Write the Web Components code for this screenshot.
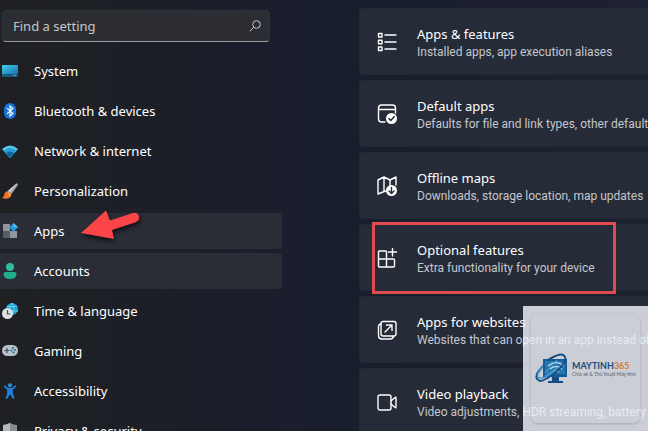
<!DOCTYPE html>
<html lang="en">
<head>
<meta charset="utf-8">
<title>Settings</title>
<style>
html,body{margin:0;height:100%;overflow:hidden;background:#1c1f26}
body{font-family:"Noto Sans","Open Sans",sans-serif;font-size:13px;color:#fff}
</style>
</head>
<body>
<settings-app></settings-app>
<script>
const icons = {
system:`<svg viewBox="0 0 16 16"><defs><linearGradient id="a" x2="1" y2="1"><stop stop-color="#3fd0e6"/><stop offset="1" stop-color="#1672b0"/></linearGradient></defs><rect y="2" width="16" height="12" rx="1" fill="#155b80"/><path d="M0 3q0-1 1-1h14q1 0 1 1v8H0z" fill="url(#a)"/><path d="M11 12.5h1m1 0h1" stroke="#62d6f0"/></svg>`,
bluetooth:`<svg viewBox="0 0 16 16"><rect x="2" width="12" height="16" rx="6" fill="#1674d8"/><path d="M5 5.2l6 5.3-3 2.5V3l3 2.5-6 5.3" fill="none" stroke="#fff" stroke-width="1.1"/></svg>`,
network:`<svg viewBox="0 0 16 16"><path d="M0 6Q8-1 16 6L8 15z" fill="#58cbea"/><path d="M1.7 7.8Q8 2 14.3 7.8L8 15z" fill="#2a9cd8"/><path d="M4 10q4-3 8 0l-4 5z" fill="#1264a8"/></svg>`,
brush:`<svg viewBox="0 0 16 16"><path d="M14.5.3q2 .5 1 2.2L9.5 11 6 8z" fill="#a7adb3"/><path d="M14.5.3L6 8l1.500 1.200z" fill="#d4d8db"/><path d="M5.700 8.200L9 11q.3 4.500-5 4.700-2.500.1-4-1.200 2-.5 2.200-2.500.3-3.500 3.500-3.800z" fill="#ed7826"/><path d="M5.700 8.200L9 11q.2 1.700-1 3z" fill="#ffad5c"/></svg>`,
apps:`<svg viewBox="0 0 16 16"><path d="M1 1h7v7H1z" fill="#8d959d"/><path d="M1 8h7v7H1z" fill="#555e68"/><path d="M8 8h7v7H8z" fill="#9198a0"/><path d="M11.500 0L16 4.300 11.500 8.700 7.300 4.300z" fill="#249ae8"/><path d="M11.500 0L16 4.300h-4.500z" fill="#59bdf5"/></svg>`,
account:`<svg viewBox="0 0 16 16"><circle cx="8" cy="4" r="4" fill="#2bbf9b"/><path d="M3.500 9h9q2 0 2 2 0 5-6.500 5T1.500 11q0-2 2-2z" fill="#1eae8b"/></svg>`,
time:`<svg viewBox="0 0 16 16"><circle cx="10" cy="6" r="6" fill="#209bd3"/><path d="M10 0q-4 5 0 12m0-12q4 5 0 12M5 3.500h10M4 8h12" fill="none" stroke="#5bdcee"/><circle cx="5.500" cy="10.500" r="5.500" fill="#dce1e5"/><path d="M5.500 7v4h3" fill="none" stroke="#4a535b" stroke-width="1.200"/></svg>`,
gaming:`<svg viewBox="0 0 16 16"><rect y="2" width="16" height="11" rx="5.500" fill="#b8c0c7"/><path d="M2.500 7.500h5M5 5v5" stroke="#454e56" stroke-width="1.200"/><g fill="#236a9d"><circle cx="11" cy="5" r="1"/><circle cx="9.500" cy="7.500" r="1"/><circle cx="13" cy="7" r="1"/><circle cx="11.500" cy="9.500" r="1"/></g></svg>`,
access:`<svg viewBox="0 0 16 16"><circle cx="8" cy="2.300" r="2.100" fill="#2390e8"/><path d="M3 2.500q-1.200-.3-1 1 .8 2 3.200 3v3.500L3.700 15q0 1.200 1.300 1l3-5 3 5q1.300.2 1.300-1l-1.500-5V6.500q2.400-1 3.200-3 .2-1.300-1-1L10 5H6z" fill="#1b83df"/></svg>`,
privacy:`<svg viewBox="0 0 16 16"><path d="M8 0q4 2 7 2v5q0 6-7 9Q1 13 1 7V2q3 0 7-2z" fill="#858c94"/><path d="M8 0v16Q1 13 1 7V2q3 0 7-2z" fill="#b3b8bd"/></svg>`,
list:`<path d="M1.500 1.500h3.500v3.500H1.500zM1.500 8.200h3.500v3.500H1.500zM1.500 15h3.500v3.500H1.500zM8 3h11M8 10h11M8 17h11"/>`,
defaults:`<path d="M8 18H4.500Q1.500 18 1.500 15V4q0-3 3-3h11q3 0 3 3v5M1.500 5.500h17"/><circle cx="14.500" cy="14.500" r="5.500" fill="#fff" stroke="none"/><path d="M11.800 14.500l2 2 3.500-4" stroke="#252a37"/>`,
maps:`<path d="M8.500 15l-7.500 3V4l6-3 6 3 6-3v8M7 1v14.500M13 4v6"/><circle cx="14.500" cy="14.500" r="5.500" fill="#fff" stroke="none"/><path d="M14.500 11.500v6m-2.500-2.500l2.500 2.500 2.500-2.500" stroke="#252a37"/>`,
optional:`<path d="M9 3H2.500Q1.500 3 1.500 4v14q0 1 1 1h14q1 0 1-1v-6q0-1-1-1h-15M9.500 19V4q0-1-1-1M15.500 0v8M11.500 4h8"/>`,
websites:`<rect x="4" y="1.500" width="15" height="14.500" rx="2"/><path d="M4 4Q1.500 4 1.500 7v8.500q0 3.500 3.500 3.500h8q3 0 3.500-2.500M8 12l7-7M9.500 5H15v5.500"/>`,
video:`<rect x="1" y="3" width="13" height="15" rx="2"/><path d="M14 9l4-3.500q1-.8 1 .5v9q0 1.300-1 .5L14 12"/>`
};

class SettingsSearch extends HTMLElement {
  constructor(){super();this.attachShadow({mode:'open'}).innerHTML=`<style>
:host{display:block;margin-right:12px}
form{display:flex;align-items:center;height:32px;box-sizing:border-box;margin:0;border:1px solid #2f3237;border-bottom-color:#989a9d;border-radius:4px;background:#2b2d32}
input{flex:1;min-width:0;padding:0 0 0 10px;border:0;outline:0;background:none;font:inherit;color:#fff}
input::placeholder{color:#c5c7c9;opacity:1}
button{display:flex;padding:8px;border:0;background:none;color:#c5c7c9}
svg{width:12px;height:12px;fill:none;stroke:currentColor}
</style><form role="search"><input type="text" placeholder="Find a setting" aria-label="Find a setting"><button type="button" aria-label="Search"><svg viewBox="0 0 12 12"><circle cx="7.500" cy="4.500" r="3.800"/><path d="M4.800 7.200L.7 11.300"/></svg></button></form>`}
}
customElements.define('settings-search',SettingsSearch);

class NavItem extends HTMLElement {
  constructor(){super();this.attachShadow({mode:'open'}).innerHTML=`<style>
:host{display:block;position:relative}
a{display:flex;align-items:center;gap:16px;height:36px;color:inherit;text-decoration:none;white-space:nowrap;border-radius:0 4px 4px 0}
:host([highlighted]) a{background:#2a2d35;margin-left:-2px;padding-left:2px}
a svg{display:block;width:16px;height:16px}
</style><a href="#">${icons[this.getAttribute('icon')]}<span><slot></slot></span></a><slot name="marker"></slot>`}
}
customElements.define('nav-item',NavItem);

class PointerArrow extends HTMLElement {
  constructor(){super();this.attachShadow({mode:'open'}).innerHTML=`<style>
:host{position:absolute;left:78px;top:-4px;pointer-events:none}
svg{display:block;width:64px;height:34px;filter:drop-shadow(1px 3px 2px #0009)}
</style><svg viewBox="0 0 64 34" aria-hidden="true"><path d="M1 24L26 1.500l4 10L53 4q5-1 6 4 .5 4-4 5.500L32 21l2 9z" fill="#fb4546"/></svg>`}
}
customElements.define('pointer-arrow',PointerArrow);

class SettingCard extends HTMLElement {
  constructor(){super();this.attachShadow({mode:'open'}).innerHTML=`<style>
:host{display:block;position:relative}
a{display:flex;align-items:center;gap:20px;height:67px;box-sizing:border-box;padding-left:17px;border-radius:4px 0 0 4px;background:#262b38;border:1px solid #232836;border-right:0;color:#fff;text-decoration:none;overflow:hidden;white-space:nowrap}
svg{flex:none;width:20px;height:20px;fill:none;stroke:#fff;stroke-width:1.400;stroke-linejoin:round;stroke-linecap:round}
.text{display:flex;flex-direction:column;padding-top:4px}
.title{line-height:18px}
.desc{font-family:Roboto,"Noto Sans",sans-serif;font-size:12px;line-height:19px;color:#c4c7ce}
:host([outlined])::after{content:"";position:absolute;left:13px;top:-2px;bottom:-3px;width:244px;box-sizing:border-box;border:3px solid #df4b50;pointer-events:none}
</style><a href="#"><svg viewBox="0 0 20 20" aria-hidden="true">${icons[this.getAttribute('icon')]}</svg><span class="text"><span class="title"><slot></slot></span><span class="desc"><slot name="desc"></slot></span></span></a>`}
}
customElements.define('setting-card',SettingCard);

class BrandBadge extends HTMLElement {
  constructor(){super();this.attachShadow({mode:'open'}).innerHTML=`<style>
:host{position:absolute;right:0;bottom:0;padding:8px;background:#f5f8ffcc;font-family:Lato,"Open Sans",sans-serif}
.tile{display:flex;align-items:center;justify-content:center;gap:3px;width:109px;height:109px;border-radius:7px;background:#d4d4d422;box-shadow:0 1px 3px #59627055}
svg{display:block;flex:none;width:34px;height:34px}
.words{display:flex;flex-direction:column;white-space:nowrap}
b{font-weight:700;font-size:9px;line-height:10px;color:#174d80}
b span{color:#d38128}
small{font-size:5px;line-height:6px;color:#59626d}
</style><div class="tile"><svg viewBox="0 0 34 34"><path d="M8 7h24v18H8z" fill="#175b98"/><path d="M10 9h20v13H10z" fill="#2476ad"/><path d="M17 25h7v4h4v2H13v-2h4z" fill="#154d83"/><path d="M13 14q8-7 16 0M15 17q6-5 12 0M18 20q3-3 6 0" fill="none" stroke="#b4d8e8" stroke-width="1.500"/><path d="M10 21L22 8M10 24L29 12" stroke="#57a8d3"/><path d="M13 8Q27-1 30 5q2 5-8 14Q10 29 5 29q-6-2-2-9l5-6" fill="none" stroke="#175083" stroke-width="2"/><path d="M8 14q-9 11-3 12 5 1 16-8" fill="none" stroke="#3c9acb" stroke-width="1.500"/></svg><div class="words"><b>MAYTINH<span>365</span></b><small>Chia sẻ &amp; Thủ thuật Máy tính</small></div></div>`}
}
customElements.define('brand-badge',BrandBadge);

class SettingsApp extends HTMLElement {
  constructor(){super();this.attachShadow({mode:'open'}).innerHTML=`<style>
:host{display:grid;grid-template-columns:282px minmax(0,1fr);column-gap:77px;position:relative;height:100vh;overflow:hidden;background:linear-gradient(90deg,#1e2023 0,#1c1f27 26%,#1a1e2e 46%,#191e2c 56%,#1e2130 100%)}
aside{padding:10px 0 0 2px}
nav{display:flex;flex-direction:column;gap:4px;padding-top:11px}
main{display:flex;flex-direction:column;gap:5px;padding-top:8px}
</style>
<aside><settings-search></settings-search><nav aria-label="Settings">
<nav-item icon="system">System</nav-item>
<nav-item icon="bluetooth">Bluetooth &amp; devices</nav-item>
<nav-item icon="network">Network &amp; internet</nav-item>
<nav-item icon="brush">Personalization</nav-item>
<nav-item icon="apps" highlighted>Apps<pointer-arrow slot="marker"></pointer-arrow></nav-item>
<nav-item icon="account" highlighted>Accounts</nav-item>
<nav-item icon="time">Time &amp; language</nav-item>
<nav-item icon="gaming">Gaming</nav-item>
<nav-item icon="access">Accessibility</nav-item>
<nav-item icon="privacy">Privacy &amp; security</nav-item>
</nav></aside>
<main>
<setting-card icon="list">Apps &amp; features<span slot="desc">Installed apps, app execution aliases</span></setting-card>
<setting-card icon="defaults">Default apps<span slot="desc">Defaults for file and link types, other defaults</span></setting-card>
<setting-card icon="maps">Offline maps<span slot="desc">Downloads, storage location, map updates</span></setting-card>
<setting-card icon="optional" outlined>Optional features<span slot="desc">Extra functionality for your device</span></setting-card>
<setting-card icon="websites">Apps for websites<span slot="desc">Websites that can open in an app instead of a browser</span></setting-card>
<setting-card icon="video">Video playback<span slot="desc">Video adjustments, HDR streaming, battery options</span></setting-card>
</main>
<brand-badge></brand-badge>`}
}
customElements.define('settings-app',SettingsApp);
</script>
</body>
</html>
